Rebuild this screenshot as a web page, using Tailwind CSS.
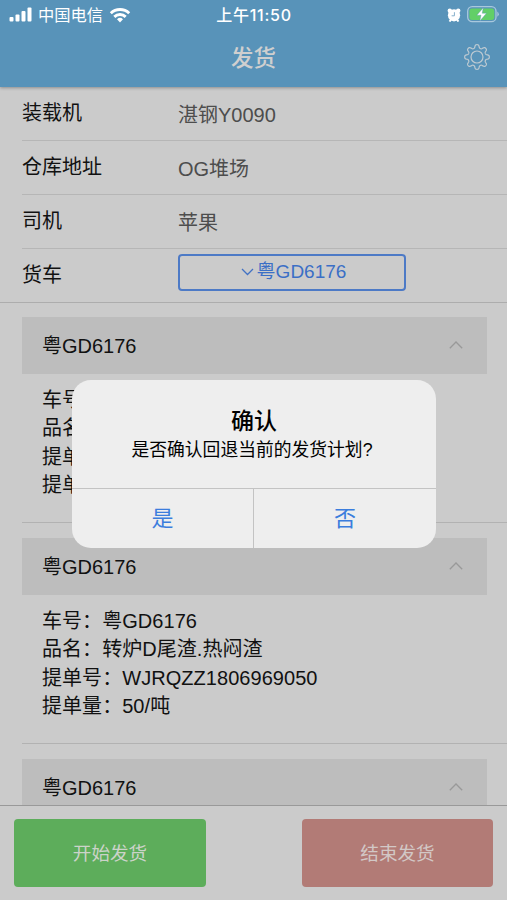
<!DOCTYPE html>
<html lang="zh-CN">
<head>
<meta charset="utf-8">
<title>发货</title>
<script src="https://cdn.jsdelivr.net/npm/@tailwindcss/browser@4"></script>
</head>
<body class="font-['Liberation_Sans','Noto_Sans_CJK_SC',sans-serif] bg-[#cbcbcb] text-[#111]">
<div class="relative flex h-[900px] w-[507px] flex-col overflow-hidden bg-[#cbcbcb] text-xl">
  <header class="z-10 flex h-[87px] shrink-0 flex-col bg-[#5893b9] shadow-[0_1px_3px_rgba(0,0,0,0.3)]">
    <div class="grid h-[29px] grid-cols-3 items-center pr-[8px] pl-[9px] text-white">
      <div class="flex items-center">
        <svg class="h-[15px] w-[23px]" viewBox="0 0 23 15" fill="#fff"><rect x="0.5" y="10" width="4" height="4.5" rx="1"/><rect x="6.5" y="7.500" width="4" height="7" rx="1"/><rect x="12.500" y="4" width="4" height="10.500" rx="1"/><rect x="18.500" y="0.500" width="4" height="14" rx="1"/></svg>
        <span class="ml-[6px] pt-[2px] text-[16.300px] leading-[27px]">中国电信</span>
        <svg class="ml-[6px] h-[16px] w-[22px]" viewBox="0 0 22 16" fill="none" stroke="#fff" stroke-width="2.900"><path d="M1.800 6.300a13.200 13.200 0 0 1 18.400 0"/><path d="M5.300 9.900a8.100 8.100 0 0 1 11.400 0"/><path d="M11 15.500l-3-3.200a4.300 4.300 0 0 1 6 0z" fill="#fff" stroke="none"/></svg>
      </div>
      <div class="text-center font-['Inter','Noto_Sans_CJK_SC',sans-serif] text-[16px] leading-[28px] font-medium tracking-[0.75px] whitespace-nowrap">上午11:50</div>
      <div class="flex items-center justify-end">
        <svg class="h-[14px] w-[14px]" viewBox="0 0 14 14"><circle cx="2.800" cy="2.700" r="2.200" fill="#fff"/><circle cx="11.200" cy="2.700" r="2.200" fill="#fff"/><path d="M2.500 13.500l2-2.500M11.500 13.500l-2-2.500" stroke="#fff" stroke-width="2"/><circle cx="7" cy="7.300" r="6.100" fill="#fff"/><path d="M7.400 4.200v3.600H4.600" fill="none" stroke="#85afcb" stroke-width="1"/></svg>
        <svg class="ml-[5px] h-[17px] w-[33px]" viewBox="0 0 33 17"><rect x="1.700" y="0.700" width="28.300" height="15" rx="4.500" fill="none" stroke="#a9c8dd" stroke-width="1.300"/><rect x="3.400" y="2.500" width="24.900" height="11.500" rx="2.700" fill="#62cf67"/><path d="M31.300 5.600q3 2.600 0 5.200z" fill="#a9c8dd"/><path d="M17.300 1.800L10.800 9.200h4.200l-1.200 5.800 6.700-7.800h-4.300z" fill="#fff" stroke="#5893b9" stroke-width=".4"/></svg>
      </div>
    </div>
    <div class="grid h-[58px] grid-cols-3 items-center pr-[17px] pl-[17px]">
      <span></span>
      <h1 class="pt-[2px] text-center text-[22.500px] leading-[56px] font-medium text-[#cfcfcf]">发货</h1>
      <svg class="-mt-[2px] h-[26px] w-[26px] justify-self-end" viewBox="0 0 26 26" fill="none" stroke="#bdcad2" stroke-width="1.200" stroke-linejoin="round"><circle cx="13" cy="13" r="6"/><path id="gear"/></svg>
    </div>
  </header>

  <section class="shrink-0 border-b border-[#adadad] pl-[22px] leading-[30px]">
    <div class="flex h-[54px] items-center border-b border-[#b6b6b6]"><div class="w-[156px] pb-px">装载机</div><div class="pt-[3px] text-[#4d4d4d]">湛钢Y0090</div></div>
    <div class="flex h-[54px] items-center border-b border-[#b6b6b6]"><div class="w-[156px] pb-px">仓库地址</div><div class="pt-[3px] text-[#4d4d4d]">OG堆场</div></div>
    <div class="flex h-[54px] items-center border-b border-[#b6b6b6]"><div class="w-[156px] pb-px">司机</div><div class="pt-[3px] text-[#4d4d4d]">苹果</div></div>
    <div class="flex h-[53px] items-center"><div class="w-[156px] pb-px">货车</div>
      <div class="mb-[7px] flex h-[37px] w-[228px] items-center justify-center rounded-[4px] border-2 border-[#4d7ac6] pb-px text-[#3b6fc6]">
        <svg class="mt-px mr-[3px] ml-[3px] h-[8px] w-[13px]" viewBox="0 0 13 8" fill="none" stroke="#4272c4" stroke-width="1.300"><path d="M1 1l5.500 5.500L12 1"/></svg><span class="text-[19px]">粤GD6176</span>
      </div>
    </div>
  </section>

  <main class="min-h-0 flex-1 overflow-hidden pt-[14px] pl-[22px]">
    <article class="mb-[15px] h-[206px] border-b border-[#b2b2b2]">
      <div class="mr-5 flex h-[57px] items-center justify-between bg-[#bdbdbd] pr-[24px] pl-5"><span>粤GD6176</span><svg class="-mt-[2px] h-[8px] w-[14px]" viewBox="0 0 14 8" fill="none" stroke="#999" stroke-width="1.300"><path d="M.800 7.300L7 1l6.200 6.300"/></svg></div>
      <div class="pt-[12px] pl-5 leading-[28.400px]"><p>车号：粤GD6176</p><p>品名：转炉D尾渣.热闷渣</p><p>提单号：WJRQZZ1806969050</p><p>提单量：50/吨</p></div>
    </article>
    <article class="mb-[15px] h-[206px] border-b border-[#b2b2b2]">
      <div class="mr-5 flex h-[57px] items-center justify-between bg-[#bdbdbd] pr-[24px] pl-5"><span>粤GD6176</span><svg class="-mt-[2px] h-[8px] w-[14px]" viewBox="0 0 14 8" fill="none" stroke="#999" stroke-width="1.300"><path d="M.800 7.300L7 1l6.200 6.300"/></svg></div>
      <div class="pt-[12px] pl-5 leading-[28.400px] tracking-[0.050px]"><p>车号：粤GD6176</p><p>品名：转炉D尾渣.热闷渣</p><p>提单号：WJRQZZ1806969050</p><p>提单量：50/吨</p></div>
    </article>
    <article>
      <div class="mr-5 flex h-[57px] items-center justify-between bg-[#bdbdbd] pr-[24px] pl-5"><span>粤GD6176</span><svg class="-mt-[2px] h-[8px] w-[14px]" viewBox="0 0 14 8" fill="none" stroke="#999" stroke-width="1.300"><path d="M.800 7.300L7 1l6.200 6.300"/></svg></div>
    </article>
  </main>

  <footer class="flex h-[95px] shrink-0 justify-between border-t border-[#999] bg-[#cbcbcb] px-[14px] pt-[13px] text-[18.600px] text-[#cbd3c9]">
    <button class="h-[68px] w-[192px] rounded-[4px] bg-[#5dad5b] pt-[2px]">开始发货</button>
    <button class="h-[68px] w-[191px] rounded-[4px] bg-[#b27b76] pt-[2px] text-[#d2c8c6]">结束发货</button>
  </footer>

  <div role="dialog" class="absolute top-[380px] left-[72px] z-20 flex h-[168px] w-[364px] flex-col overflow-hidden rounded-[19px] bg-[#eeeeee] text-center text-black">
    <div class="flex h-[108px] shrink-0 flex-col items-center gap-[5px] pt-[28px]">
      <h2 class="text-[23px] leading-[26px] font-medium">确认</h2>
      <p class="mr-[4px] text-[17.800px] leading-[22px]">是否确认回退当前的发货计划?</p>
    </div>
    <div class="grid flex-1 grid-cols-2 border-t border-[#c3c3c3] text-[22px] leading-[60px] text-[#3b7ddd]">
      <div class="border-r border-[#c3c3c3]">是</div>
      <div>否</div>
    </div>
  </div>
</div>
<script>
  // Eight rounded teeth around the settings hub
  const points = [];
  for (let i = 0; i < 192; i++) {
    const a = i / 192 * Math.PI * 2;
    const r = 10.7 + 1.6 * Math.tanh(1.8 * Math.cos(8 * a)) / Math.tanh(1.8);
    points.push((13 + r * Math.cos(a)).toFixed(2) + ' ' + (13 + r * Math.sin(a)).toFixed(2));
  }
  document.getElementById('gear').setAttribute('d', 'M' + points.join('L') + 'Z');
</script>
</body>
</html>
